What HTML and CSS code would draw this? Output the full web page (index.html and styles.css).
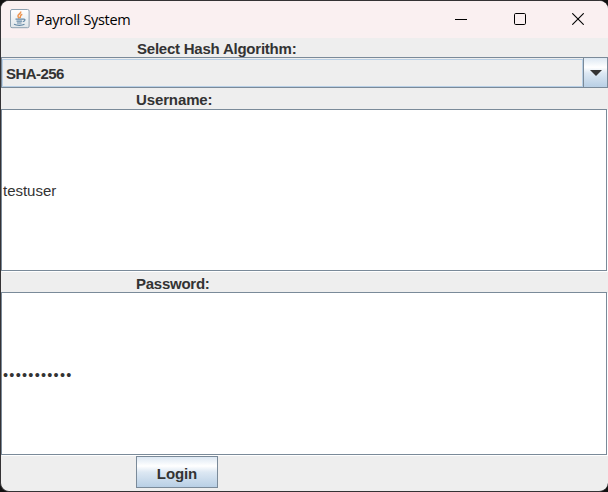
FILE: index.html
```html
<!DOCTYPE html>
<html lang="en">
<head>
<meta charset="utf-8">
<title>Payroll System</title>
<link rel="stylesheet" href="styles.css">
</head>
<body>
<main class="window">
  <header class="titlebar">
    <svg class="app-icon" width="20" height="20" viewBox="0 0 20 20">
      <defs><linearGradient id="tile" x1="0" y1="0" x2="0" y2="1"><stop offset="0" stop-color="#fff"/><stop offset="1" stop-color="#dfe5e9"/></linearGradient></defs>
      <rect x=".5" y=".5" width="18.6" height="18.2" rx="1.5" fill="url(#tile)" stroke="#8da0b0"/>
      <path d="M10.8 2.5C11 5 7.2 5.500 8 7.500C8.300 8.500 9 9 9.300 9.500M12.300 5.300C9.500 6.300 10.500 7.500 10.200 9" fill="none" stroke="#ee9550" stroke-width="1.5"/>
      <path d="M5.500 10.200H13M6.500 12.200H12M7 14H11.500M4 15.300C7 16.800 12 16.600 14.500 15.300M13 10.200C16 9.800 15.200 12.200 12.800 12.600" fill="none" stroke="#6488a5" stroke-width="1.200"/>
    </svg>
    <h1 class="title">Payroll System</h1>
    <div class="controls">
      <svg width="12" height="12" viewBox="0 0 12 12"><path d="M0 6.500H12" stroke="#000"/></svg>
      <svg width="12" height="12" viewBox="0 0 12 12"><rect x=".5" y=".5" width="11" height="11" rx="1.200" fill="none" stroke="#000"/></svg>
      <svg width="12" height="12" viewBox="0 0 12 12"><path d="M.3.3L11.700 11.700M11.700.3L.3 11.700" stroke="#000" stroke-width="1.100"/></svg>
    </div>
  </header>
  <div class="label label-hash"><span>Select Hash Algorithm:</span></div>
  <div class="combo">
    <div class="combo-value"><span>SHA-256</span></div>
    <div class="combo-button"><svg width="12" height="6" viewBox="0 0 12 6"><path d="M0 0H12L6 6Z" fill="#333"/></svg></div>
  </div>
  <div class="label label-user"><span>Username:</span></div>
  <div class="field field-user"><span>testuser</span></div>
  <div class="label label-pass"><span>Password:</span></div>
  <div class="field field-pass"><span>•••••••••••</span></div>
  <div class="actions"><button class="login">Login</button></div>
</main>
</body>
</html>
```
FILE: styles.css
```css
* { box-sizing: border-box; }
body {
  margin: 0;
  width: 608px;
  height: 492px;
  overflow: hidden;
  background: #111;
  font: 15px/17px "Liberation Sans", sans-serif;
  color: #333;
}
.window {
  display: flex;
  flex-direction: column;
  width: 608px;
  height: 492px;
  border: solid #343234;
  border-width: 1px 0 1px 1px;
  border-radius: 9px;
  overflow: hidden;
  background: #eee;
}
.titlebar {
  display: flex;
  height: 37px;
  background: #faf0f1;
  color: #000;
}
.app-icon { margin: 8px 0 0 9px; }
.title {
  margin: 9px 0 0 6px;
  font: 14.5px/20px "Open Sans", sans-serif;
  letter-spacing: -0.3px;
}
.controls {
  display: flex;
  gap: 46.5px;
  margin: 12px 24px 0 auto;
}
.label {
  display: flex;
  padding-left: 135px;
  font-weight: bold;
}
.label-hash { height: 19px; padding-top: 2px; padding-left: 136px; letter-spacing: -0.23px; }
.label-user { height: 21px; padding-top: 3px; letter-spacing: -0.12px; }
.label-pass { height: 20px; padding-top: 3px; letter-spacing: -0.25px; }
.combo { display: flex; height: 31px; }
.combo-value {
  display: flex;
  align-items: center;
  flex: 1;
  border: 1px solid #7a8a99;
  border-right: 0;
  box-shadow: inset 0 1px #eee, inset 1px 0 #b8cfe5, inset -1px -1px #b8cfe5, inset 0 2px #b8cfe5;
  padding: 2px 0 0 4px;
  font-weight: bold;
  letter-spacing: -0.55px;
}
.combo-button {
  display: flex;
  align-items: center;
  justify-content: center;
  width: 25px;
  border: 1px solid #7a8a99;
  background: linear-gradient(#dde8f3, #fff 32%, #dde8f3 52%, #b8cfe5);
}
.field {
  display: flex;
  align-items: center;
  margin-right: 1px;
  border: 1px solid #7a8a99;
  background: #fff;
  box-shadow: 1px 1px #fff;
}
.field-user { height: 162px; margin-bottom: 1px; padding-left: 1px; }
.field-user span { letter-spacing: -0.02px; }
.field-pass { height: 163px; margin-bottom: 1px; padding: 4px 0 0 1px; }
.field-pass span { font-size: 14.5px; letter-spacing: 1.25px; }
.actions { padding-left: 135px; }
.login {
  display: block;
  width: 82px;
  height: 32px;
  padding: 2px 0 0;
  border: 1px solid #7a8a99;
  background: linear-gradient(#dde8f3, #fff 30%, #dde8f3 50%, #b8cfe5);
  color: #333;
  font: bold 15px/17px "Liberation Sans", sans-serif;
  letter-spacing: -0.1px;
}
```
